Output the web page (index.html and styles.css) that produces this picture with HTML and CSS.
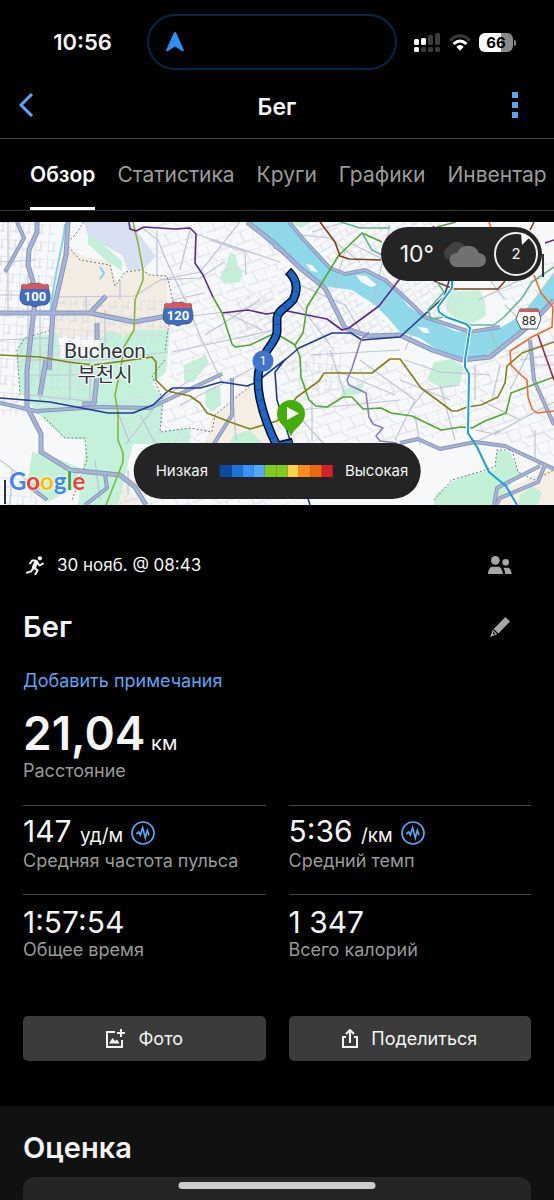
FILE: index.html
```html
<!DOCTYPE html>
<html lang="ru">
<head>
  <meta charset="UTF-8" />
  <meta name="viewport" content="width=device-width, initial-scale=1.0" />
  <title>Бег</title>
  <link rel="stylesheet" href="styles.css">
</head>
<body>
  <div class="status-bar">
    <span class="clock">10:56</span>
    <div class="island">
      <svg width="18" height="20" viewBox="0 0 18 20"><path d="M9 0Q10 0 10.500 1.500L17.800 18Q18 20 16 19L9 14.500 2 19Q0 20 .2 18L7.500 1.500Q8 0 9 0z" fill="#2e90fa"/></svg>
    </div>
    <div class="status-icons">
      <svg width="27" height="20" viewBox="0 0 27 20">
        <g fill="#fff"><rect x="0" y="7" width="5" height="6" rx="1.500"/><rect x="7" y="6" width="5" height="7" rx="1.500"/><rect x="0" y="15" width="5" height="5" rx="1.500"/></g>
        <g fill="#3b3b3b"><rect x="14" y="3" width="5" height="10" rx="1.500"/><rect x="21" y="1" width="5" height="12" rx="1.500"/><rect x="7" y="15" width="5" height="5" rx="1.500"/><rect x="14" y="15" width="5" height="5" rx="1.500"/><rect x="21" y="15" width="5" height="5" rx="1.500"/></g>
      </svg>
      <svg width="22" height="17" viewBox="0 0 22 17" fill="none" stroke-width="3">
        <path d="M1 6.500Q11-3 21 6.500" stroke="#3b3b3b"/>
        <path d="M4.500 10Q11 4 17.500 10" stroke="#fff"/>
        <path d="M7.300 12.700Q11 9.500 14.700 12.700L11 16.800z" fill="#fff"/>
      </svg>
      <div class="battery"><span>66</span></div>
    </div>
  </div>

  <header class="nav">
    <button class="icon-btn" aria-label="Назад">
      <svg width="16" height="26" viewBox="0 0 16 26"><path d="M14 2L3 13l11 11" fill="none" stroke="#58a6f5" stroke-width="3"/></svg>
    </button>
    <h1>Бег</h1>
    <button class="icon-btn menu" aria-label="Меню">
      <svg width="6" height="26" viewBox="0 0 6 26" fill="#58a6f5"><path d="M0 0h6v6H0zM0 10h6v6H0zM0 20h6v6H0z"/></svg>
    </button>
  </header>

  <nav class="tabs">
    <a href="#" class="active">Обзор</a>
    <a href="#">Статистика</a>
    <a href="#">Круги</a>
    <a href="#">Графики</a>
    <a href="#">Инвентар</a>
  </nav>

  <div class="map">
    <svg class="map-svg" viewBox="0 222 554 283" preserveAspectRatio="xMidYMid slice">
      <defs>
        <pattern id="gridA" width="13" height="17" patternUnits="userSpaceOnUse" patternTransform="rotate(4)"><path d="M0 0H13M0 0V17M6 0V9M0 9H8" fill="none" stroke="#d3d7e3" stroke-width="1"/></pattern>
        <pattern id="gridB" width="15" height="13" patternUnits="userSpaceOnUse" patternTransform="rotate(-32)"><path d="M0 0H15M0 0V13M7 0V7M3 7H15" fill="none" stroke="#d3d7e3" stroke-width="1"/></pattern>
        <pattern id="gridC" width="24" height="21" patternUnits="userSpaceOnUse" patternTransform="rotate(-18)"><path d="M0 0H24M0 0V14L6 21M12 0L14 12H24M4 12H14" fill="none" stroke="#d8dbe6" stroke-width="1"/></pattern>
      </defs>
      <rect y="222" width="554" height="283" fill="#f7f8fa"/>

      <!-- land use -->
      <path d="M66 243L80 255 110 262 117 285 127 270 142 268 150 275 167 276 168 340 50 336 53 300 58 262z" fill="#f3ece2"/>
      <path d="M222 410L235 395 258 385 262 420 275 445H205L212 415zM90 470L120 475 140 505H85zM480 505L510 488 554 465V505z" fill="#f4eee4"/>
      <path d="M84 222H129L138 233 156 256 143 270 128 270 122 255 88 236z" fill="#d8dff3"/>
      <path d="M88 236L98 240 122 261 122 271 108 262 88 244z" fill="#c3f1d7"/>
      <path d="M20 338L58 333 60 358 98 356 100 338 112 330 124 337 134 330H170L166 372 152 384 163 398 160 432 190 428V444H133L118 505H78L87 440 64 438 44 420 20 392 17 360z" fill="#c3f1dc"/>
      <path d="M32 452L48 455 80 468 75 488 48 502 28 480z" fill="#c3f1d7"/>
      <path d="M230 252L236 255 237 266 243 271 240 282 224 284 220 277 226 266z" fill="#c3f1d7"/>
      <path d="M184 365L206 355 208 364 193 382 184 381zM206 390L220 386 221 405 212 412 205 405z" fill="#c3f1d7"/>
      <path d="M448 292L480 290 485 302 486 316 473 323 460 322 446 310z" fill="#c9f0d8"/>
      <path d="M434 362L452 359 464 367 460 384 442 388 427 380zM342 390L365 382 360 394 341 397z" fill="#c3f1d7"/>
      <path d="M434 505L436 494 452 482 470 474 495 470 497 450 510 452 520 474 508 487 497 505zM520 495L532 486 542 492 538 505H518zM285 222L310 222 302 228z" fill="#c3f1d7"/>
      <path d="M233 435L250 430 262 443H230z" fill="#c3f1d7"/>

      <!-- small streets -->
      <path d="M0 222H52L60 262 52 330 18 340 17 392 40 415H0zM0 475L28 480 40 505H0z" fill="url(#gridA)"/>
      <path d="M52 300H168V340H52zM20 338H98V410L45 415 20 392z" fill="url(#gridA)"/>
      <path d="M138 222H240L280 250 272 340 260 380 170 382 170 280z" fill="url(#gridC)"/>
      <path d="M235 300L272 290 275 340 240 340z" fill="url(#gridB)"/>
      <path d="M280 262L330 290 340 345 300 372 276 372z" fill="url(#gridB)"/>
      <path d="M325 285L352 292 390 325 400 337 340 345z" fill="url(#gridB)"/>
      <path d="M302 222H440L460 300 436 320 405 300 380 272 341 272 317 250z" fill="url(#gridB)"/>
      <path d="M276 365H400L470 362 554 342V440L470 430 400 445H276z" fill="url(#gridC)"/>
      <path d="M290 360L340 345 345 390 295 400z" fill="url(#gridA)"/>
      <path d="M485 262H554V300L520 310 490 290zM480 362L554 310V345z" fill="url(#gridC)"/>
      <path d="M110 395H168L210 412V443H125z" fill="url(#gridC)"/>
      <path d="M120 470H290V505H120zM480 430H554V460z" fill="url(#gridC)"/>

      <!-- river -->
      <path d="M247 222H289L302 235 317 253 330 268 341 275 365 272 380 276 397 290 408 306 424 317 455 331 474 334 500 328 520 316 535 298 554 272V302L540 317 520 337 500 350 480 357 460 358 440 352 420 338 400 332 388 318 375 305 352 290 330 287 310 278 290 260 274 248z" fill="#8ed8e9"/>
      <path d="M306 264L312 265 318 272 311 271zM356 275L366 276 377 285 371 287 361 282zM417 327L427 328 430 333 424 333z" fill="#f7f8fa"/>
      <path d="M65 224C63 250 55 265 50 315M100 267l4 6-4 6" fill="none" stroke="#7fd4e8" stroke-width="2"/>
      <path d="M390 225L373 305M405 350L418 320M490 330l8 20M346 248l-12 40" stroke="#b8bccb" fill="none"/>

      <!-- secondary roads -->
      <g fill="none" stroke="#bfc5d6" stroke-width="1.200">
        <path d="M0 262L36 260M0 295H52M0 340L50 338M8 222V310M28 275V410M40 300V400M53 297L135 296 160 280 200 278 224 262M86 296V312M105 310V345M120 300V280M157 230V275"/>
        <path d="M140 226L158 240 166 260 185 300 200 336 222 382M160 280L200 272 240 222M210 240L245 252 246 275M196 234L280 262M175 318L225 312 262 330M205 335L260 300M172 352L275 330M172 300L205 293M232 382L236 440M180 405L240 375 268 360M190 230L180 270"/>
        <path d="M302 235L330 238 360 262M312 232L345 222M350 243L395 265M300 285L345 305 360 330M296 300L330 345M310 355L400 350M330 350L345 395M300 410L400 400M302 420L325 445M312 400V440M335 370L395 395M360 360L415 400 395 440M405 360L440 372 490 375M400 380L450 400M410 410L425 390 460 385M420 445L415 415M440 385L455 440M475 365V400M480 400L520 420 554 402M500 365L492 400M500 430L470 445M475 430L495 434 520 420M530 350L510 390M478 300L520 280M490 280L505 300M505 305L520 320M520 360L554 355M530 365L554 365M535 430V460"/>
        <path d="M125 445L160 400 190 380M140 415L155 443M100 360L168 352M90 355V410M70 340V400M28 360H98M28 375H98M28 395L98 402M118 413L130 443M100 500L95 460M128 470V495M0 460L40 490M10 505L12 470"/>
      </g>
      <g fill="none" stroke="#777d7c" stroke-width="1" stroke-dasharray="2 2">
        <path d="M84 222L75 235 66 244 80 260 110 265 115 286 125 272 142 270 150 275 167 276 173 302 168 330 165 352"/>
        <path d="M54 300L52 330 25 338 17 350 20 395M44 417L65 438 85 438 87 460 72 500M165 360L152 376 163 400 160 432 190 428 212 432 215 415 250 386"/>
        <path d="M434 500L452 480 495 467 497 450 512 450 518 472 534 480 554 470"/>
      </g>

      <!-- highways: dark edge, then a lighter fill -->
      <g fill="none" stroke-linejoin="round">
        <g stroke="#8796ba">
          <path stroke-width="5" d="M37 222V232L29 250 28 265 36 292 27 370V407L41 434V452L70 470 120 475 135 487 146 505"/>
          <path stroke-width="5" d="M68 222L66 255 53 312 49 370M0 313H90L134 322 173 315M90 313L106 296M97 323V340M46 360L40 395M97 378L94 404H82"/>
          <path stroke-width="4" d="M17 222L24 238 5 272M36 411L100 407 150 408 205 382 222 374M0 403L40 412M232 378V415L210 450M30 487L47 500M105 475L107 488 85 505"/>
          <path stroke-width="5" d="M247 222L274 243 300 268 325 288 345 328 368 336 400 335 432 350 462 360 490 357 530 325 554 300"/>
          <path stroke-width="4" d="M274 246L285 252M289 222L304 240 330 268 345 274 365 270 385 280 400 293 425 317 470 332 500 327"/>
          <path stroke-width="4" d="M530 340L534 380 554 425M400 443L418 439 440 449 475 442 505 446 554 469M545 465L538 482 500 498 496 505M540 466L497 488 494 505"/>
        </g>
        <g stroke="#a6b4d7">
          <path stroke-width="3" d="M37 222V232L29 250 28 265 36 292 27 370V407L41 434V452L70 470 120 475 135 487 146 505"/>
          <path stroke-width="3" d="M68 222L66 255 53 312 49 370M0 313H90L134 322 173 315M90 313L106 296M97 323V340M46 360L40 395M97 378L94 404H82"/>
          <path stroke-width="2" d="M17 222L24 238 5 272M36 411L100 407 150 408 205 382 222 374M0 403L40 412M232 378V415L210 450M30 487L47 500M105 475L107 488 85 505"/>
          <path stroke-width="3" d="M247 222L274 243 300 268 325 288 345 328 368 336 400 335 432 350 462 360 490 357 530 325 554 300"/>
          <path stroke-width="2" d="M274 246L285 252M289 222L304 240 330 268 345 274 365 270 385 280 400 293 425 317 470 332 500 327"/>
          <path stroke-width="2" d="M530 340L534 380 554 425M400 443L418 439 440 449 475 442 505 446 554 469M545 465L538 482 500 498 496 505M540 466L497 488 494 505"/>
        </g>
      </g>

      <!-- metro lines -->
      <g fill="none" stroke-width="1.600" stroke-linejoin="round">
        <path stroke="#83b83a" d="M133 222L138 243 143 270V280L135 300 134 330 124 347 121 367 115 395 118 413V440L123 453V462L106 505"/>
        <path stroke="#5b2a8c" d="M129 222L130 229 136 231 144 227 175 229 190 228 196 234 195 263 203 275 213 297M222 313L248 310 266 314 287 311 327 319 342 330 349 328 379 306 399 280 434 226M545 243L554 240"/>
        <path stroke="#50a82c" d="M213 297L222 313 232 344 235 347 250 345 273 334 282 337 295 345 300 357 301 377 309 400 316 406 327 407 343 397H352L363 409 381 408 391 413 412 416 441 430 461 427 472 428 485 421 506 413 511 393 554 377M295 345L303 333 307 307 339 255 362 233 382 242M437 227L456 222"/>
        <path stroke="#1f3d8f" d="M0 398L50 402 108 413H133L153 405 168 391 173 388H200L221 382 247 386 255 383 286 359 299 348 332 333H351L362 340 400 337 444 297 449 281M284 361L275 372 277 400 290 440 310 505"/>
        <path stroke="#857f16" d="M0 355L40 357 68 362 93 365 117 362 152 357 156 362V380L167 391 190 396 200 403 207 413 230 422 250 429 277 421 297 397 319 381 324 373H372L390 359H400L421 388 452 411H457L467 407 481 405 498 397 505 383 507 366 522 353 554 342"/>
        <path stroke="#7d3f1a" d="M320 222L335 242 340 256 349 259 381 260M434 281L454 289H498L505 281M530 230L534 222"/>
        <path stroke="#62b88f" d="M341 222L360 228 390 228M362 233L372 250 382 255M437 282L444 292 428 310 431 319 445 317 471 325H494L504 317 522 298 532 282 554 267"/>
        <path stroke="#fff" stroke-width="4" d="M452 281V288L438 307 439 312 446 317 466 324 470 328 465 360V367L469 374 468 433"/>
        <path stroke="#1ca0d6" stroke-width="2" d="M452 281V288L438 307 439 312 446 317 466 324 470 328 465 360V367L469 374 468 433 477 447 489 472 506 486 517 505"/>
        <path stroke="#f06a2c" d="M489 222L491 228M534 275L541 293 553 307 552 327 532 337 510 351 511 365 521 375 527 380 528 397 532 409 537 413 554 411"/>
        <path stroke="#a52444" d="M538 335L554 380"/>
        <path stroke="#8b7cbd" d="M369 332L361 340 352 368 347 380 349 385 366 393 369 417 373 424 383 428 376 436 380 441 397 443"/>
      </g>

      <!-- road shields -->
      <g font-family="Roboto, sans-serif" font-weight="700" font-size="13" text-anchor="middle">
        <path d="M22 285Q28 286 31 283 35 285 39 283 43 286 48 285L50 297Q50 304 44 305H40L35 307 30 305H26Q20 304 20 297z" fill="#3c6fc4" stroke="#4d5a72" stroke-width="1"/>
        <path d="M22 284Q28 286 31 283 35 285 39 283 43 286 48 284L49 289H21z" fill="#d8585c"/>
        <text x="35" y="301" fill="#fff">100</text>
        <path d="M165 304Q171 305 174 302 178 304 182 302 186 305 191 304L193 316Q193 323 187 324H183L178 326 173 324H169Q163 323 163 316z" fill="#3c6fc4" stroke="#4d5a72" stroke-width="1"/>
        <path d="M165 303Q171 305 174 302 178 304 182 302 186 305 191 303L192 308H164z" fill="#d8585c"/>
        <text x="178" y="320" fill="#fff">120</text>
        <path d="M520 309H538L541 319 537 329H521L516 319z" fill="#fff" stroke="#555" stroke-width="1"/>
        <path d="M520 309H538L539 312H519z" fill="#d8585c"/>
        <text x="529" y="325" font-weight="400" font-size="13" fill="#333">88</text>
      </g>
      <g text-anchor="middle" fill="#30333c" stroke="#fff" stroke-width="2" paint-order="stroke">
        <text x="105" y="358" font-family="Roboto, sans-serif" font-size="21">Bucheon</text>
        <text x="105" y="382" font-family="'Noto Sans CJK KR', sans-serif" font-size="20">부천시</text>
      </g>

      <!-- recorded track -->
      <g fill="none" stroke-linejoin="round">
        <path stroke="#07101f" stroke-width="9" d="M288 271C300 282 296 294 293 300 285 309 278 310 277 318V332C276 342 266 348 262 361 256 372 258 390 260 399 264 418 269 430 277 446L293 442"/>
        <path stroke="#1b68c9" stroke-width="6" d="M289 272C300 282 296 294 293 300 285 309 278 310 277 318V332C276 342 266 348 262 361 256 372 258 390 260 399 264 418 269 430 277 446L292 443"/>
        <path stroke="#1450a2" stroke-width="6" stroke-dasharray="1 9" d="M290 273C300 282 296 294 293 300 285 309 278 310 277 318V332C276 342 266 348 262 361 256 372 258 390 260 399 264 418 269 430 277 444"/>
      </g>
      <circle cx="263" cy="361" r="10.500" fill="#3f75cc"/>
      <text x="263" y="365" font-family="Roboto, sans-serif" font-size="12" text-anchor="middle" fill="#fff">1</text>
      <path d="M291 436C288 428 277 424 277 414A14 14 0 0 1 305 414C305 424 294 428 291 436z" fill="#45ad08"/>
      <path d="M287 407L299 413.500 287 420z" fill="#fff"/>
      <path d="M5 480V504M543 254V277" stroke="#333" stroke-width="2"/>
    </svg>
    <div class="google"><span class="g-blue">G</span><span class="g-red">o</span><span class="g-yellow">o</span><span class="g-blue">g</span><span class="g-green">l</span><span class="g-red">e</span></div>

    <div class="weather">
      <span>10°</span>
      <svg width="44" height="25" viewBox="0 0 44 25">
        <path d="M5 17A7 7 0 0 1 6 5 10 10 0 0 1 23 4 7 7 0 0 1 27 14L20 17z" fill="#414141"/>
        <path d="M14 25A7 7 0 0 1 15 11 12 12 0 0 1 37 11 7 7 0 0 1 37 25z" fill="#717171"/>
      </svg>
      <div class="wind">
        <svg width="44" height="44" viewBox="0 0 44 44"><circle cx="22" cy="22" r="21" fill="none" stroke="#eee" stroke-width="2"/><path d="M27 1L36 5 28 13z" fill="#fff"/></svg>
        <span>2</span>
      </div>
    </div>

    <div class="legend">
      <span>Низкая</span>
      <div class="scale"><i class="z1"></i><i class="z2"></i><i class="z3"></i><i class="z4"></i><i class="z5"></i><i class="z5"></i><i class="z6"></i><i class="z7"></i><i class="z8"></i><i class="z9"></i></div>
      <span>Высокая</span>
    </div>
  </div>

  <main class="summary">
    <div class="meta">
      <svg width="18" height="19" viewBox="0 0 54 58" fill="none" stroke="#f2f2f2" stroke-width="6" stroke-linecap="round" stroke-linejoin="round">
        <circle cx="42" cy="7" r="6.500" fill="#f2f2f2" stroke="none"/>
        <path d="M31 19L24 35" stroke-width="13"/>
        <path d="M28 14L18 14 12 23M34 20L41 29 51 23M22 37L15 47 2 51M25 36L35 44 28 56"/>
      </svg>
      <span>30 нояб. @ 08:43</span>
      <button class="icon-btn" aria-label="Доступ">
        <svg width="24" height="18" viewBox="0 0 72 54" fill="#a6a6a6"><circle cx="22" cy="13" r="13"/><circle cx="53" cy="19" r="10"/><path d="M0 54C1 42 5 32 14 32h16c9 0 13 10 15 22zM46 35h12c8 0 12 9 13 19H52c-1-8-3-14-6-19z"/></svg>
      </button>
    </div>
    <div class="title-row">
      <h2>Бег</h2>
      <button class="icon-btn" aria-label="Изменить">
        <svg width="20" height="20" viewBox="0 0 57 57" fill="#a6a6a6"><path d="M44 0L57 13 24 47 10 34z"/><path fill-rule="evenodd" d="M8 36L0 57 21 49zM10 42L15 49 8 49z"/></svg>
      </button>
    </div>
    <a href="#" class="note-link">Добавить примечания</a>

    <div class="distance"><b>21,04</b> км</div>
    <div class="label">Расстояние</div>

    <div class="stats">
      <div class="stat">
        <div class="value"><span>147 <small>уд/м</small></span>
          <svg width="24" height="24" viewBox="0 0 72 72" fill="none" stroke="#58a6f5"><circle cx="36" cy="36" r="33" stroke-width="5"/><path d="M16 39L23 33 28 42 35 20 43 51 49 28 54 43" stroke-width="5"/></svg>
        </div>
        <div class="label">Средняя частота пульса</div>
      </div>
      <div class="stat">
        <div class="value"><span>5:36 <small>/км</small></span>
          <svg width="24" height="24" viewBox="0 0 72 72" fill="none" stroke="#58a6f5"><circle cx="36" cy="36" r="33" stroke-width="5"/><path d="M16 39L23 33 28 42 35 20 43 51 49 28 54 43" stroke-width="5"/></svg>
        </div>
        <div class="label">Средний темп</div>
      </div>
      <div class="stat">
        <div class="value"><span>1:57:54</span></div>
        <div class="label">Общее время</div>
      </div>
      <div class="stat">
        <div class="value"><span>1 347</span></div>
        <div class="label">Всего калорий</div>
      </div>
    </div>

    <div class="actions">
      <button>
        <svg width="20" height="20" viewBox="0 0 20 20" fill="none" stroke="#f2f2f2" stroke-width="2"><path d="M10 3H2v15h15v-7M16 0v8M12 4h8"/><path d="M4 14.500L7.500 9l2.500 3 2-1.500 2.500 4z" fill="#f2f2f2" stroke="none"/></svg>
        Фото
      </button>
      <button>
        <svg width="16" height="20" viewBox="0 0 16 20" fill="none" stroke="#f2f2f2" stroke-width="2"><path d="M4 8H1v10h14V8h-3M8 14V2M4 5l4-4 4 4"/></svg>
        Поделиться
      </button>
    </div>
  </main>

  <section class="rating">
    <h2>Оценка</h2>
    <div class="card"></div>
  </section>
  <div class="home-indicator"></div>
</body>
</html>
```
FILE: styles.css
```css
* {
  box-sizing: border-box;
}
html {
  background: #111;
}
body {
  margin: 0;
  height: 100vh;
  overflow: hidden;
  display: flex;
  flex-direction: column;
  background: #000;
  color: #f4f4f4;
  font-family: Inter, "Liberation Sans", sans-serif;
  font-size: 17px;
  line-height: 20px;
}
h1, h2 {
  margin: 0;
  font-weight: 600;
}
button {
  font: inherit;
  color: inherit;
  border: none;
  cursor: pointer;
}
a {
  text-decoration: none;
}
svg {
  display: block;
  flex-shrink: 0;
}

/* status bar */
.status-bar {
  display: grid;
  grid-template-columns: 1fr 250px 1fr;
  align-items: center;
  padding: 14px 20px 0 10px;
}
.clock {
  justify-self: center;
  padding-left: 8px;
  font-size: 22px;
  font-weight: 600;
}
.island {
  height: 56px;
  border: 2px solid #06264a;
  border-radius: 28px;
  padding-left: 17px;
  display: flex;
  align-items: center;
}
.status-icons {
  display: flex;
  align-items: center;
  justify-content: center;
  gap: 8px;
  padding-right: 4px;
}
.battery {
  position: relative;
  width: 34px;
  height: 19px;
  border-radius: 6px;
  background: linear-gradient(to right, #fff 66%, #8a8a8a 66%);
  color: #000;
  font-size: 15px;
  font-weight: 700;
  line-height: 19px;
  text-align: center;
}
.battery::after {
  content: "";
  position: absolute;
  right: -3px;
  top: 7px;
  width: 2px;
  height: 6px;
  border-radius: 0 2px 2px 0;
  background: #8a8a8a;
}

/* title and tabs */
.nav {
  display: grid;
  grid-template-columns: 1fr auto 1fr;
  align-items: center;
  height: 69px;
  padding: 2px 18px 0;
  border-bottom: 1px solid #444;
  flex-shrink: 0;
}
.nav h1 {
  padding-top: 4px;
  font-size: 23px;
  line-height: 28px;
}
.icon-btn {
  padding: 0;
  background: none;
  justify-self: start;
}
.icon-btn.menu {
  justify-self: end;
  padding-right: 18px;
}
.tabs {
  display: flex;
  gap: 22px;
  height: 72px;
  padding: 0 30px;
  border-bottom: 1px solid #3a3a3a;
  overflow: hidden;
  flex-shrink: 0;
}
.tabs a {
  color: #9b9b9b;
  font-size: 21px;
  line-height: 71px;
  white-space: nowrap;
}
.tabs .active {
  color: #fff;
  font-weight: 600;
  border-bottom: 3px solid #fff;
}

/* map */
.map {
  position: relative;
  height: 283px;
  margin-top: 11px;
  flex-shrink: 0;
}
.map-svg {
  width: 100%;
  height: 100%;
}
.google {
  position: absolute;
  left: 9px;
  bottom: 8px;
  font-family: Lato, sans-serif;
  font-size: 24px;
  line-height: 32px;
  font-weight: 700;
  text-shadow: 0 0 2px #fff, 0 0 2px #fff;
}
.g-blue { color: #4285f4; }
.g-red { color: #ea4335; }
.g-yellow { color: #fbbc05; }
.g-green { color: #34a853; }
.weather {
  position: absolute;
  top: 5px;
  right: 12px;
  height: 54px;
  padding: 0 4px 0 19px;
  border-radius: 27px;
  background: #242424;
  display: flex;
  align-items: center;
  gap: 8px;
  font-size: 23px;
}
.wind {
  position: relative;
}
.wind span {
  position: absolute;
  inset: 0;
  font-size: 15px;
  line-height: 44px;
  text-align: center;
}
.legend {
  position: absolute;
  bottom: 6px;
  left: 50%;
  transform: translateX(-50%);
  height: 56px;
  padding: 0 12px 0 22px;
  border-radius: 28px;
  background: #242424;
  display: flex;
  align-items: center;
  gap: 12px;
  font-size: 15px;
}
.scale {
  display: flex;
  width: 113px;
  height: 12px;
}
.scale i {
  flex: 1;
}
.z1 { background: #0a4ba0; }
.z2 { background: #1c74d4; }
.z3 { background: #3a92fb; }
.z4 { background: #56a8ff; }
.z5 { background: #80cc1e; }
.z6 { background: #ffd04a; }
.z7 { background: #ff8a22; }
.z8 { background: #ec6a10; }
.z9 { background: #d8202c; }

/* activity summary */
.summary {
  padding: 46px 23px 45px;
  flex-shrink: 0;
}
.meta {
  display: flex;
  align-items: center;
  gap: 13px;
  height: 28px;
  padding: 0 19px 0 3px;
}
.meta .icon-btn {
  margin-left: auto;
}
.title-row {
  display: flex;
  align-items: center;
  justify-content: space-between;
  margin-top: 28px;
  padding-right: 21px;
}
h2 {
  font-size: 29px;
  line-height: 40px;
}
.note-link {
  display: block;
  margin-top: 24px;
  color: #58a6f5;
  font-size: 18px;
}
.distance {
  height: 56px;
  margin-top: 14px;
  font-size: 20px;
  line-height: 56px;
}
.distance b {
  font-size: 46px;
  font-weight: 600;
}
.label {
  color: #999;
  font-size: 18px;
}
.stats {
  display: grid;
  grid-template-columns: 1fr 1fr;
  column-gap: 23px;
  margin-top: 24px;
}
.stat {
  height: 89px;
  padding-top: 9px;
  border-top: 1px solid #444;
}
.value {
  display: flex;
  align-items: center;
  gap: 8px;
  height: 36px;
  font-size: 30px;
  line-height: 36px;
}
.value small {
  font-size: 19px;
}
.actions {
  display: grid;
  grid-template-columns: 1fr 1fr;
  gap: 23px;
  margin-top: 33px;
}
.actions button {
  display: flex;
  align-items: center;
  justify-content: center;
  gap: 13px;
  height: 45px;
  border-radius: 5px;
  background: #3b3b3b;
  font-size: 18px;
}

/* rating */
.rating {
  flex: 1;
  padding: 22px 23px 0;
  background: #111;
}
.card {
  height: 60px;
  margin-top: 9px;
  border-radius: 12px;
  background: #252525;
}
.home-indicator {
  position: fixed;
  bottom: 11px;
  left: 50%;
  transform: translateX(-50%);
  width: 197px;
  height: 7px;
  border-radius: 4px;
  background: #ccc;
}
```
